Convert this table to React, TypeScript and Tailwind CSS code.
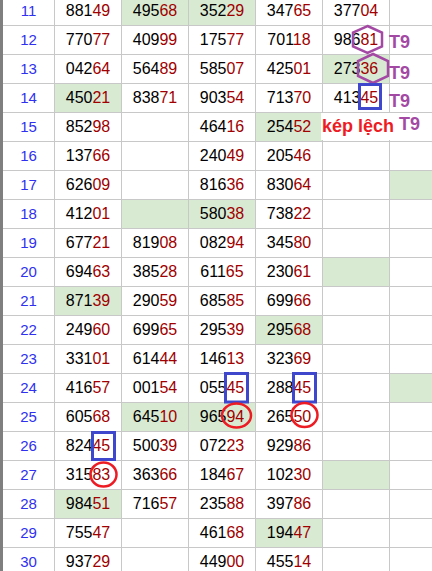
import React from 'react';

// g suffix = green highlighted cell
const rows: [number, string[]][] = [
  [11, ['88149', '49568g', '35229g', '34765', '37704', '']],
  [12, ['77077', '40999', '17577', '70118', '98681', '']],
  [13, ['04264', '56489', '58507', '42501', '27336g', '']],
  [14, ['45021g', '83871', '90354', '71370', '41345', '']],
  [15, ['85298', '', '46416', '25452g', '', '']],
  [16, ['13766', '', '24049', '20546', '', '']],
  [17, ['62609', '', '81636', '83064', '', 'g']],
  [18, ['41201', 'g', '58038g', '73822', '', '']],
  [19, ['67721', '81908', '08294', '34580', '', '']],
  [20, ['69463', '38528', '61165', '23061', 'g', '']],
  [21, ['87139g', '29059', '68585', '69966', '', '']],
  [22, ['24960', '69965', '29539', '29568g', '', '']],
  [23, ['33101', '61444', '14613', '32369', '', '']],
  [24, ['41657', '00154', '05545', '28845', '', 'g']],
  [25, ['60568', '64510g', '96594g', '26550', '', '']],
  [26, ['82445', '50039', '07223', '92986', '', '']],
  [27, ['31583', '36366', '18467', '10230', 'g', '']],
  [28, ['98451g', '71657', '23588', '39786', '', '']],
  [29, ['75547', '', '46168', '19447g', '', '']],
  [30, ['93729', '', '44900', '45514', '', '']],
];

function Cell({ raw, last }: { raw: string; last?: boolean }) {
  const green = raw.endsWith('g');
  const num = raw.replace('g', '');
  return (
    <div
      className={`flex items-center justify-center h-full ${
        last ? 'flex-1' : 'w-[67px] border-r border-[#c8c8c8]'
      } ${green ? 'bg-[#d9ead3]' : 'bg-white'}`}
    >
      {num && (
        <span>
          <span className="text-black">{num.slice(0, 3)}</span>
          <span className="text-[#a00000]">{num.slice(3)}</span>
        </span>
      )}
    </div>
  );
}

export default function App() {
  return (
    <div
      className="relative w-[432px] h-[571px] overflow-hidden bg-white flex"
      style={{ fontFamily: '"Liberation Sans", Arial, sans-serif' }}
    >
      <div className="w-[3px] bg-[#7f7f7f]" />
      <div className="flex-1 -mt-[3px]">
        {rows.map(([n, cells]) => (
          <div key={n} className="flex h-[29px] border-b border-[#c8c8c8] text-[16px]">
            <div className="w-[52px] border-r border-[#c8c8c8] flex items-center justify-center text-[15px] text-[#3030f0]">
              {n}
            </div>
            {cells.map((c, i) => (
              <Cell key={i} raw={c} last={i === 5} />
            ))}
          </div>
        ))}
      </div>

      {/* annotation for row 15 */}
      <div className="absolute left-[321px] top-[113px] w-[111px] h-[27px] bg-white" />
      <span className="absolute left-[322px] top-[115px] text-[18px] font-bold text-[#ed1c24] leading-[22px]">
        kép lệch
      </span>
      <span className="absolute left-[399px] top-[113px] text-[18px] font-bold text-[#a349a4] leading-[22px]">T9</span>
      <span className="absolute left-[389px] top-[31px] text-[18px] font-bold text-[#a349a4] leading-[22px]">T9</span>
      <span className="absolute left-[389px] top-[62px] text-[18px] font-bold text-[#a349a4] leading-[22px]">T9</span>
      <span className="absolute left-[389px] top-[90px] text-[18px] font-bold text-[#a349a4] leading-[22px]">T9</span>

      <svg className="absolute left-0 top-0" width="432" height="571" viewBox="0 0 432 571" fill="none">
        <polygon
          points="367.5,26 382,32.5 382,46.5 367.5,53 353,46.5 353,32.5"
          stroke="#a349a4"
          strokeWidth="2.5"
        />
        <polygon
          points="373,54 388,61 388,76 373,83 358,76 358,61"
          stroke="#a349a4"
          strokeWidth="2.5"
        />
        <g stroke="#3f48cc" strokeWidth="3">
          <rect x="359.5" y="84.5" width="21" height="24" />
          <rect x="225.5" y="373.5" width="22" height="28.5" />
          <rect x="293.5" y="373.5" width="22" height="28.5" />
          <rect x="92.5" y="432.5" width="22" height="27" />
        </g>
        <g stroke="#ed1c24" strokeWidth="2.5">
          <ellipse cx="236.5" cy="415.5" rx="14.5" ry="12" />
          <ellipse cx="304.5" cy="415" rx="13" ry="12" />
          <ellipse cx="103.5" cy="474.5" rx="13" ry="12" />
        </g>
      </svg>
    </div>
  );
}
